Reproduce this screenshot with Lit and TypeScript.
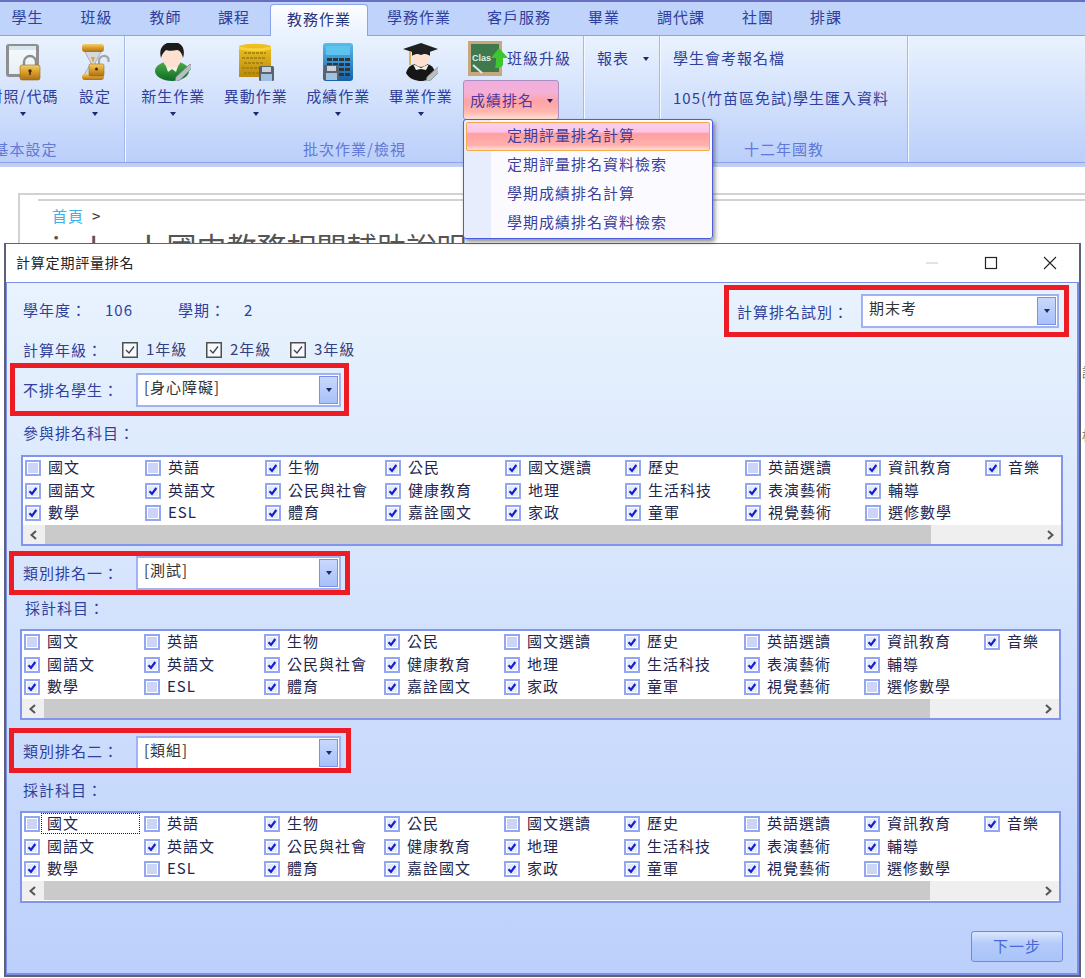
import { LitElement, html, svg, css } from "lit";
import { customElement } from "lit/decorators.js";

const TABS = ["學生", "班級", "教師", "課程", "教務作業", "學務作業", "客戶服務", "畢業", "調代課", "社團", "排課"];
const MENU = ["定期評量排名計算", "定期評量排名資料檢索", "學期成績排名計算", "學期成績排名資料檢索"];

// [label, checked] by column, three rows per column
const subjects = (elective: boolean): [string, boolean][] => [
  ["國文", false], ["國語文", true], ["數學", true],
  ["英語", false], ["英語文", true], ["ESL", false],
  ["生物", true], ["公民與社會", true], ["體育", true],
  ["公民", true], ["健康教育", true], ["嘉詮國文", true],
  ["國文選讀", elective], ["地理", true], ["家政", true],
  ["歷史", true], ["生活科技", true], ["童軍", true],
  ["英語選讀", false], ["表演藝術", true], ["視覺藝術", true],
  ["資訊教育", true], ["輔導", true], ["選修數學", false],
  ["音樂", true],
];

const lockBadge = (x: number, y: number) => svg`
  <path d="M${x + 4} ${y + 9}v-4a6 6 0 0 1 12 0v4" fill="none" stroke="#8d8d8d" stroke-width="2.4"/>
  <rect x=${x} y=${y + 8} width="20" height="15" rx="2" fill="url(#gold)" stroke="#9a6a10" stroke-width=".6"/>
  <circle cx=${x + 10} cy=${y + 14} r="1.7" fill="#3d2a08"/>
  <rect x=${x + 9.3} y=${y + 14} width="1.4" height="4" fill="#3d2a08"/>`;

const floppy = (x: number, y: number) => svg`
  <rect x=${x} y=${y} width="15" height="15" rx="1.5" fill="#59626e"/>
  <rect x=${x + 3} y=${y + 1} width="9" height="5" fill="#c9d2da"/>
  <rect x=${x + 2} y=${y + 8} width="11" height="7" fill="#9fc0de"/>`;

const pen = (x: number, y: number) => svg`
  <path d="M${x} ${y}l14-13 3 3-13 13-5 2z" fill="#b9bec2" stroke="#7e8488" stroke-width=".7"/>`;

const ICONS: Record<string, unknown> = {
  lock: svg`<rect x="1" y="1" width="33" height="33" rx="3" fill="#8f8f8f"/>
    <rect x="4" y="3" width="27" height="28" fill="url(#screen)"/>
    <rect x="4" y="3" width="27" height="4" fill="#d6e6ee"/>${lockBadge(15, 14)}`,
  hourglass: svg`<path d="M4 7h18l-7 13 7 12H4l7-12z" fill="#d5d9dc" stroke="#9ba1a5" stroke-width=".8"/>
    <path d="M11 14h4l-2 6z M9 30l4-7 4 7z" fill="#d8a64a"/>
    <rect x="2" y="1" width="22" height="8" rx="3" fill="url(#gold)"/>
    <rect x="2" y="31" width="22" height="6" rx="3" fill="url(#gold)"/>
    <path d="M19 22v-5a5 5 0 0 1 9.500-1v3" fill="none" stroke="#a3a7aa" stroke-width="2.200"/>
    <rect x="9" y="21" width="15" height="12" rx="1.500" fill="url(#gold)" stroke="#8c5f10" stroke-width=".5"/>
    <circle cx="16.500" cy="26" r="1.500" fill="#3d2a08"/>`,
  student: svg`<ellipse cx="17" cy="28" rx="17" ry="10" fill="url(#green)"/>
    <path d="M10 20h14l-3 9-4-3-4 3z" fill="#f2f2ea"/>
    <ellipse cx="17" cy="14" rx="10" ry="11" fill="#fde0cf"/>
    <path d="M6 15C3 4 10-1 18-1s13 6 10 16c-1-4-3-8-6-8-4 1-9 1-11 0-2 2-4 4-5 8z" fill="#1c1c1c"/>
    ${pen(21, 34)}`,
  folder: svg`<path d="M2 3c6-3 26-3 32 0v31H2z" fill="url(#paper)"/>
    <path d="M2 3c6 3 26 3 32 0v3c-6 3-26 3-32 0z" fill="#f7d237"/>
    <path d="M7 10h22M5 15h24M7 20h20M5 25h20M7 30h16" stroke="#a07b0c" stroke-width="1.600" stroke-dasharray="3 1"/>
    ${floppy(22, 23)}`,
  calc: svg`<rect x="0" y="0" width="30" height="38" rx="3" fill="url(#calc)"/>
    <rect x="3" y="3" width="24" height="9" rx="1" fill="#5cc4ee"/>
    <g fill="#2b3640">
      <rect x="4" y="15" width="5" height="3"/><rect x="10" y="15" width="5" height="3"/><rect x="16" y="15" width="5" height="3"/><rect x="22" y="15" width="5" height="3"/>
      <rect x="4" y="20" width="5" height="3"/><rect x="10" y="20" width="5" height="3"/><rect x="16" y="20" width="5" height="3"/><rect x="22" y="20" width="5" height="3"/>
      <rect x="16" y="25" width="5" height="3"/><rect x="22" y="25" width="5" height="3"/>
      <rect x="16" y="30" width="5" height="3"/><rect x="22" y="30" width="5" height="3"/>
    </g>${floppy(1, 22)}`,
  grad: svg`<path d="M3 30c2-8 9-10 15-10s13 2 14 10c-3 6-9 8-14 8S6 36 3 30z" fill="#161616"/>
    <path d="M10 21l8 4 8-4-3 6-5-1-5 1z" fill="#eef0ea"/>
    <ellipse cx="18" cy="15" rx="8.500" ry="9" fill="#fde0cf"/>
    <path d="M9 13c2-3 16-3 18 0v-4H9z" fill="#1c1c1c"/>
    <path d="M0 6L18 0l17 6-17 6z" fill="#202020"/>
    <path d="M7 8v14" stroke="#d9a520" stroke-width="1.600"/>
    ${pen(24, 34)}`,
};

const arrow = html`<span class="tri"></span>`;

@customElement("app-root")
export class AppRoot extends LitElement {
  static override styles = css`
    :host {
      display: block;
      position: relative;
      height: 978px;
      overflow: hidden;
      background: #fff;
      font-family: "Noto Sans CJK TC", "Noto Sans CJK JP", sans-serif;
      font-size: 15px;
      letter-spacing: 1px;
      color: #2f3f9c;
    }
    svg { display: block; }

    /* ribbon */
    .ribbon { height: 167px; background: #bfd3fb; border-top: 2px solid #686fc2; box-sizing: border-box; }
    .tabs {
      display: grid;
      grid-template-columns: 69px 69px 69px 68px 100px 102px 98px 72px 82px 72px 64px;
      margin-left: -7px;
      height: 33px;
      padding-top: 2px;
      box-sizing: border-box;
    }
    .tab { display: flex; align-items: center; justify-content: center; height: 31px; padding-bottom: 6px; box-sizing: border-box; }
    .tab.active {
      position: relative;
      z-index: 1;
      height: 32px;
      margin-left: 2px;
      padding-bottom: 5px;
      background: linear-gradient(#fdfeff, #e9f1fe);
      border: 1px solid #8ba3ea;
      border-bottom: 0;
      border-radius: 4px 4px 0 0;
      color: #26337f;
    }
    .panel {
      display: flex;
      height: 128px;
      background: linear-gradient(#e9f2fe, #bbcffa);
      border-top: 1px solid #8ba3ea;
      border-bottom: 1px solid #8ba3ea;
      box-shadow: 0 3px 0 #c5cee8;
      box-sizing: border-box;
    }
    .group {
      display: flex;
      flex-direction: column;
      flex: none;
      border-right: 1px solid #a4b8f0;
      box-shadow: 1px 0 0 #f4f8ff;
      box-sizing: border-box;
    }
    .g1 { width: 198px; margin-left: -73px; }
    .g2 { width: 458px; margin-left: 1px; }
    .g3 { width: 75px; margin-left: 1px; }
    .g4 { width: 247px; margin-left: 1px; }
    .g5 { flex: 1; border: 0; box-shadow: none; }
    .content { flex: 1; display: flex; min-height: 0; }
    .g1 .content { justify-content: flex-end; padding-right: 5px; }
    .g2 .content { padding-left: 6px; }
    .caption { height: 20px; line-height: 20px; margin-bottom: 3px; text-align: center; color: #6178d6; }
    .big { display: flex; flex-direction: column; align-items: center; width: 82.500px; padding-top: 7px; white-space: nowrap; }
    .big.w70 { width: 72px; margin-right: 12px; }
    .big.w48 { width: 48px; }
    .icon { height: 38px; }
    .big .text { margin-top: 5px; height: 20px; line-height: 20px; }
    .big .tri { margin-top: 6px; }
    .tri { display: block; width: 0; height: 0; border: 3.500px solid transparent; border-top: 4px solid #1b2a70; border-bottom: 0; }
    .small { display: flex; flex-direction: column; margin-left: 1px; width: 100px; }
    .promote { display: flex; align-items: center; height: 44px; padding-left: 5px; white-space: nowrap; }
    .promote svg { margin-right: -1px; flex: none; }
    .promote span { padding-bottom: 2px; }
    .rank {
      display: flex;
      align-items: center;
      justify-content: space-between;
      width: 96px;
      height: 40px;
      box-sizing: border-box;
      padding: 0 5px 2px 6px;
      border: 1px solid #a88fc0;
      border-radius: 3px;
      background: linear-gradient(#efaedd 0, #f5b0d8 30%, #ffa3a4 55%, #ffb7b0 82%, #ffe3d8 100%);
      color: #4b3aa0;
    }
    .rank .tri { margin-top: 4px; }
    .menu-btn { display: flex; align-items: center; gap: 14px; height: 48px; padding-left: 12px; white-space: nowrap; }
    .menu-btn span:first-child { padding-bottom: 6px; }
    .menu-btn .tri { margin-bottom: 2px; }
    .lines { display: flex; flex-direction: column; padding: 2px 12px; }
    .line { height: 40px; line-height: 40px; white-space: nowrap; }

    /* page behind the window */
    .page { margin: 26px 0 0 18px; height: 60px; border-top: 2px solid #d2d2d2; border-left: 2px solid #d2d2d2; box-sizing: border-box; }
    .rule { margin: 4px 0 0 18px; height: 2px; background: #d2d2d2; }
    .crumb { margin: 5px 0 0 32px; line-height: 20px; color: #333; }
    .crumb b { font-weight: 400; color: #3fb0e8; margin-right: 8px; }
    .heading { margin: 0 0 0 32px; font-size: 30px; line-height: 40px; color: #555; white-space: nowrap; letter-spacing: 0; word-spacing: 7px; }
    .bit { position: absolute; left: 1082px; font-size: 13px; color: #777; letter-spacing: 0; }
    .bit.a { top: 362px; }
    .bit.b { top: 425px; }

    /* dropdown */
    .menu {
      position: absolute;
      left: 463px;
      top: 119px;
      z-index: 5;
      width: 250px;
      height: 120px;
      box-sizing: border-box;
      padding: 2px;
      background: linear-gradient(90deg, #e7edfc 27px, #fbfbff 27px);
      border: 1px solid #4d5cdc;
      border-radius: 3px;
      box-shadow: 2px 3px 4px rgba(60, 60, 60, .55);
    }
    .item { height: 29px; line-height: 25px; padding-left: 41px; white-space: nowrap; color: #3c3f9e; }
    .item.on {
      border: 1px solid #f5a94a;
      border-radius: 2px;
      box-sizing: border-box;
      padding-left: 40px;
      line-height: 24px;
      background: linear-gradient(#fcd0f0 0, #fbc5e6 32%, #ff9fa2 40%, #ffb1ad 82%, #ffe0d8 100%);
    }

    /* window */
    .window {
      position: absolute;
      left: 4px;
      top: 243px;
      width: 1077px;
      height: 734px;
      z-index: 3;
      display: flex;
      flex-direction: column;
      box-sizing: border-box;
      border: 2px solid #5c6079;
      border-top-width: 1px;
      background: #fff;
    }
    .title { display: flex; align-items: center; height: 38px; flex: none; padding-left: 10px; color: #222; font-size: 14px; letter-spacing: .8px; }
    .title span { flex: 1; padding-bottom: 2px; }
    .ctrl { width: 59px; display: flex; justify-content: center; }
    .body {
      flex: 1;
      display: flex;
      flex-direction: column;
      border: 1px solid #7c8ee6;
      border-right-width: 2px;
      border-bottom-width: 2px;
      background: linear-gradient(#e9f3fe, #bcd0fb);
      box-sizing: border-box;
    }
    .top { display: flex; align-items: center; height: 52px; margin-top: 2px; }
    .info { display: grid; grid-template-columns: 82px 73px 66px auto; margin-left: 16px; padding-bottom: 4px; }
    .red {
      display: flex;
      align-items: center;
      flex: none;
      box-sizing: border-box;
      border: 5px solid #ed1c24;
      overflow: hidden;
      padding-left: 8px;
    }
    .red label { flex: none; width: 113px; white-space: nowrap; }
    .red-top { margin-left: auto; margin-right: 8px; width: 345px; height: 52px; }
    .red-top label { width: 124px; }
    .red-top .combo { width: 198px; }
    .r1 { margin: 5px 0 0 3px; width: 339px; height: 53px; }
    .r2 { margin: 5px 0 0 2px; width: 341px; height: 44px; padding-left: 9px; }
    .r2 label { padding-bottom: 2px; }
    .r3 { margin: 8px 0 0 2px; width: 342px; height: 45px; padding-left: 9px; }
    .r3 .combo { align-self: flex-start; margin-top: 3px; }
    .combo {
      display: flex;
      align-items: center;
      flex: none;
      width: 205px;
      height: 34px;
      box-sizing: border-box;
      background: #fff;
      border: 2px solid #a0b1f4;
      padding: 1px;
      color: #333;
    }
    .value { flex: 1; padding: 0 0 7px 5px; }
    .combo i {
      display: flex;
      align-items: center;
      justify-content: center;
      flex: none;
      width: 19px;
      height: 100%;
      box-sizing: border-box;
      border: 1px solid #7a90ea;
      background: linear-gradient(#c8d8fc, #a8c1f9);
    }
    .grades { display: grid; grid-template-columns: 99px 84px 84px 84px; align-items: center; margin: 1px 0 0 16px; height: 20px; }
    .grade { display: flex; align-items: center; gap: 8px; color: #333f7e; }
    .grades span span { padding-bottom: 2px; }
    .box { display: block; flex: none; width: 16px; height: 16px; }
    .hint { margin: 8px 0 0 16px; height: 20px; line-height: 18px; }
    .hint.mid { margin-top: 4px; margin-left: 18px; }
    .hint.low { margin-top: 8px; }
    .list {
      display: flex;
      flex-direction: column;
      flex: none;
      box-sizing: border-box;
      border: 2px solid #8294ec;
      background: #fff;
      color: #22264f;
    }
    .l1 { margin: 11px 0 0 14px; width: 1042px; height: 91px; }
    .l2 { margin: 10px 0 0 13px; width: 1041px; height: 91px; }
    .l3 { margin: 10px 0 0 13px; width: 1041px; height: 92px; }
    .cells { display: grid; grid-auto-flow: column; grid-template-rows: repeat(3, 22.500px); grid-auto-columns: 120px; height: 68px; padding-left: 2px; flex: none; }
    .cell { position: relative; display: flex; align-items: center; gap: 7px; white-space: nowrap; }
    .cell span { padding-bottom: 3px; }
    .cell.focus::after { content: ""; position: absolute; left: 17px; top: 0; width: 99px; height: 21px; border: 1px dotted #222; box-sizing: border-box; }
    .bar { display: flex; height: 19px; background: #efefef; }
    .bar i { display: flex; align-items: center; justify-content: center; flex: none; width: 21px; }
    .thumb { flex: 0 0 886px; background: #cacaca; margin-left: 1px; }
    .fill { flex: 1; }
    .next {
      align-self: flex-end;
      flex: none;
      margin: 28px 14px 0 0;
      width: 92px;
      height: 31px;
      line-height: 27px;
      text-align: center;
      box-sizing: border-box;
      border: 1px solid #6f88e4;
      border-radius: 3px;
      background: linear-gradient(#dbe6fd, #b4cbfa 40%, #a9c4f9);
      color: #4a68d6;
    }
  `;

  private box(on: boolean) {
    return html`<svg class="box" viewBox="0 0 16 16">
      <rect width="16" height="16" fill="#93a6f1"/>
      <rect x="2" y="2" width="12" height="12" fill="#fff"/>
      <rect x="3" y="3" width="10" height="10" fill=${on ? "#e4e9fc" : "#ccd4f8"}/>
      ${on ? svg`<path d="M4.500 8.200l2.500 2.600 4.300-5.800" fill="none" stroke="#1520d0" stroke-width="2.200"/>` : ""}
    </svg>`;
  }

  private grade(text: string) {
    return html`<span class="grade">
      <svg class="box" viewBox="0 0 16 16">
        <rect x=".75" y=".75" width="14.500" height="14.500" fill="#f7f9fe" stroke="#4e4e4e" stroke-width="1.500"/>
        <path d="M4 8l3 3 5-6.500" fill="none" stroke="#444" stroke-width="1.300"/>
      </svg><span>${text}</span></span>`;
  }

  private combo(value: string) {
    return html`<div class="combo"><span class="value">${value}</span><i>${arrow}</i></div>`;
  }

  private list(cls: string, elective: boolean, focus = false) {
    return html`<div class="list ${cls}">
      <div class="cells">
        ${subjects(elective).map(([name, on], i) => html`
          <div class="cell ${focus && i === 0 ? "focus" : ""}">${this.box(on)}<span>${name}</span></div>`)}
      </div>
      <div class="bar">
        <i><svg width="9" height="10" viewBox="0 0 9 10"><path d="M7 1L2.500 5 7 9" fill="none" stroke="#555" stroke-width="2"/></svg></i>
        <div class="thumb"></div>
        <div class="fill"></div>
        <i><svg width="9" height="10" viewBox="0 0 9 10"><path d="M2 1l4.500 4L2 9" fill="none" stroke="#555" stroke-width="2"/></svg></i>
      </div>
    </div>`;
  }

  private bigButton(label: string, icon: string, w: number, h: number, cls = "") {
    return html`<div class="big ${cls}">
      <svg class="icon" width=${w} height="38" viewBox="0 0 ${w} ${h}">${ICONS[icon]}</svg>
      <span class="text">${label}</span>
      ${arrow}
    </div>`;
  }

  override render() {
    return html`
      <svg width="0" height="0" class="defs">
        <defs>
          <linearGradient id="gold" x1="0" y1="0" x2="0" y2="1"><stop offset="0" stop-color="#f1cf6b"/><stop offset=".5" stop-color="#d99c28"/><stop offset="1" stop-color="#a9701a"/></linearGradient>
          <linearGradient id="screen" x1="0" y1="0" x2="0" y2="1"><stop offset="0" stop-color="#f6fbfd"/><stop offset="1" stop-color="#e8eff2"/></linearGradient>
          <linearGradient id="green" x1="0" y1="0" x2="0" y2="1"><stop offset="0" stop-color="#4fb04a"/><stop offset="1" stop-color="#0f6a26"/></linearGradient>
          <linearGradient id="paper" x1="0" y1="0" x2="0" y2="1"><stop offset="0" stop-color="#f0c326"/><stop offset="1" stop-color="#b98a0c"/></linearGradient>
          <linearGradient id="calc" x1="0" y1="0" x2="0" y2="1"><stop offset="0" stop-color="#58bde8"/><stop offset="1" stop-color="#1760a8"/></linearGradient>
        </defs>
      </svg>

      <div class="ribbon">
        <div class="tabs">
          ${TABS.map((t) => html`<div class="tab ${t === "教務作業" ? "active" : ""}">${t}</div>`)}
        </div>
        <div class="panel">
          <div class="group g1">
            <div class="content">
              ${this.bigButton("對照/代碼", "lock", 36, 38, "w70")}
              ${this.bigButton("設定", "hourglass", 30, 38, "w48")}
            </div>
            <div class="caption">基本設定</div>
          </div>
          <div class="group g2">
            <div class="content">
              ${this.bigButton("新生作業", "student", 36, 38)}
              ${this.bigButton("異動作業", "folder", 37, 38)}
              ${this.bigButton("成績作業", "calc", 30, 38)}
              ${this.bigButton("畢業作業", "grad", 35, 38)}
              <div class="small">
                <div class="promote">
                  <svg width="40" height="35" viewBox="0 0 40 35">
                    <rect x="0" y="0" width="34" height="35" fill="#c9a77c"/>
                    <rect x="3" y="3" width="28" height="28" fill="#3f7a4c"/>
                    <text x="4" y="20" font-size="9" font-weight="700" fill="#dfeee2" font-family="Liberation Sans" letter-spacing="0">Clas</text>
                    <path d="M5 24l9 8" stroke="#e6e6e6" stroke-width="2"/>
                    <path d="M31 7l9 10h-5v7c-2 3-5 3-8 3 1-3 1-6 1-10h-5z" fill="#3fc52f"/>
                  </svg>
                  <span>班級升級</span>
                </div>
                <div class="rank"><span>成績排名</span>${arrow}</div>
              </div>
            </div>
            <div class="caption">批次作業/檢視</div>
          </div>
          <div class="group g3">
            <div class="content"><div class="menu-btn"><span>報表</span>${arrow}</div></div>
            <div class="caption">&nbsp;</div>
          </div>
          <div class="group g4">
            <div class="content">
              <div class="lines">
                <div class="line">學生會考報名檔</div>
                <div class="line">105(竹苗區免試)學生匯入資料</div>
              </div>
            </div>
            <div class="caption">十二年國教</div>
          </div>
          <div class="group g5"></div>
        </div>
      </div>

      <div class="page">
        <div class="rule"></div>
        <div class="crumb"><b>首頁</b>&gt;</div>
        <div class="heading">jschool 國中教務相關輔助說明</div>
      </div>
      <span class="bit a">說</span>
      <span class="bit b">相</span>

      <div class="menu">
        ${MENU.map((m, i) => html`<div class="item ${i === 0 ? "on" : ""}">${m}</div>`)}
      </div>

      <div class="window">
        <div class="title">
          <span>計算定期評量排名</span>
          <div class="ctrl"><svg width="14" height="12" viewBox="0 0 14 12"><path d="M1 6h12" stroke="#c8c8c8"/></svg></div>
          <div class="ctrl"><svg width="14" height="14" viewBox="0 0 14 14"><rect x="1.500" y="1.500" width="11" height="11" fill="none" stroke="#222" stroke-width="1.200"/></svg></div>
          <div class="ctrl"><svg width="14" height="14" viewBox="0 0 14 14"><path d="M1 1l12 12M13 1L1 13" stroke="#222" stroke-width="1.100"/></svg></div>
        </div>
        <div class="body">
          <div class="top">
            <div class="info"><span>學年度：</span><span>106</span><span>學期：</span><span>2</span></div>
            <div class="red red-top"><label>計算排名試別：</label>${this.combo("期末考")}</div>
          </div>
          <div class="grades">
            <span>計算年級：</span>
            ${this.grade("1年級")}${this.grade("2年級")}${this.grade("3年級")}
          </div>
          <div class="red r1"><label>不排名學生：</label>${this.combo("[身心障礙]")}</div>
          <div class="hint">參與排名科目：</div>
          ${this.list("l1", true)}
          <div class="red r2"><label>類別排名一：</label>${this.combo("[測試]")}</div>
          <div class="hint mid">採計科目：</div>
          ${this.list("l2", false)}
          <div class="red r3"><label>類別排名二：</label>${this.combo("[類組]")}</div>
          <div class="hint low">採計科目：</div>
          ${this.list("l3", false, true)}
          <div class="next">下一步</div>
        </div>
      </div>
    `;
  }
}

declare global {
  interface HTMLElementTagNameMap {
    "app-root": AppRoot;
  }
}
